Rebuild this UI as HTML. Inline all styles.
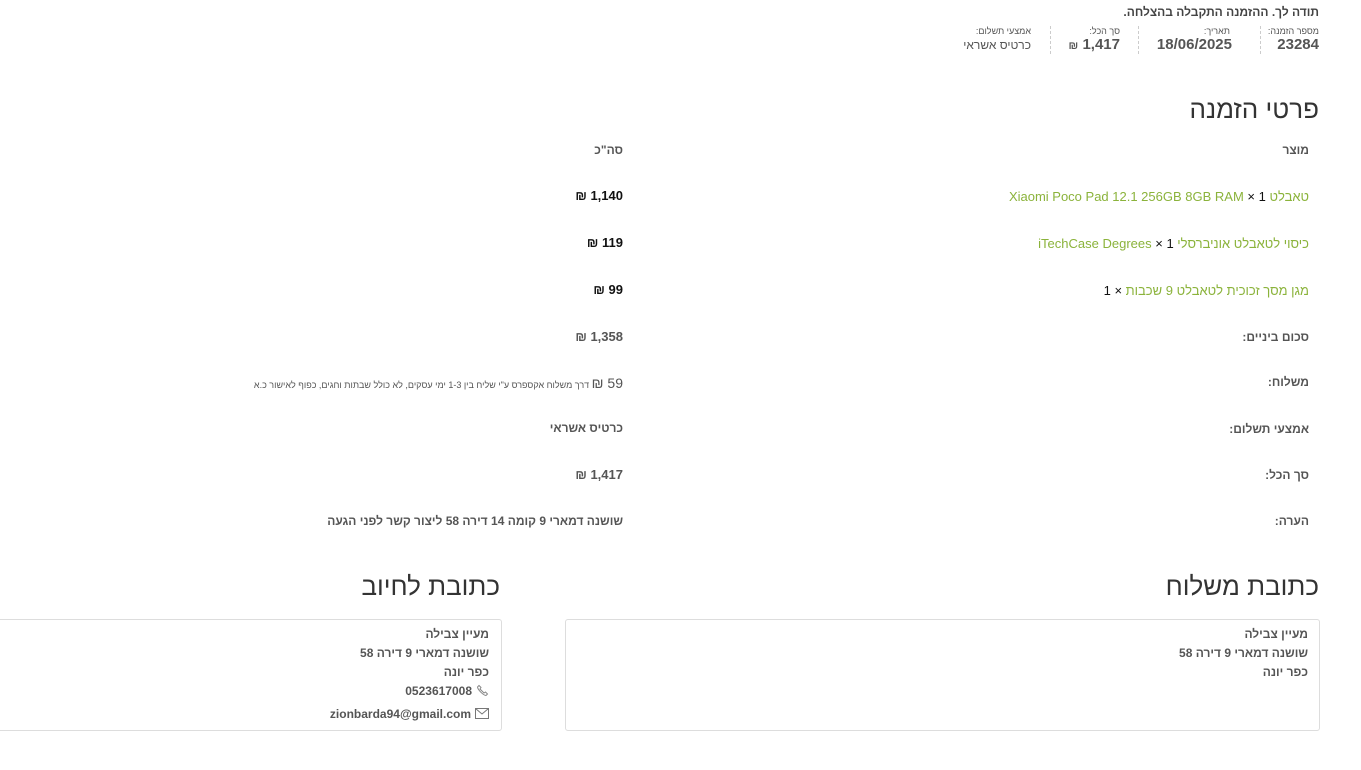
<!DOCTYPE html>
<html><head><meta charset="utf-8"><style>
body{margin:0;width:1361px;height:770px;background:#fff;font-family:"Liberation Sans","Noto Sans CJK SC",sans-serif;color:#555;position:relative;overflow:hidden}
.a{position:absolute;white-space:nowrap;direction:rtl}
.r{right:52px}
.l{right:738px}
.b{font-weight:bold}
.g{color:#8bb33b}
.k{color:#111}
.lab{font-size:9px;color:#555}
.val{font-size:15px;font-weight:bold;color:#555}
.sep{position:absolute;top:26px;height:28px;border-left:1px dashed #ccc}
h2{position:absolute;margin:0;font-weight:normal;font-size:26px;color:#333;direction:rtl;white-space:nowrap}
.box{position:absolute;border:1px solid #ddd;border-radius:3px;height:110px;top:619px}
.ln{font-size:12px;font-weight:bold;color:#555;position:absolute;direction:rtl;white-space:nowrap}
</style></head><body>
<div class="a b" style="right:42px;top:5px;font-size:12px;color:#444">תודה לך. ההזמנה התקבלה בהצלחה.</div>
<div class="a lab" style="right:42px;top:26px">מספר הזמנה:</div>
<div class="a val" style="right:42px;top:36px">23284</div>
<div class="sep" style="left:1260px"></div>
<div class="a lab" style="right:131px;top:26px">תאריך:</div>
<div class="a val" style="right:129px;top:36px">18/06/2025</div>
<div class="sep" style="left:1138px"></div>
<div class="a lab" style="right:241px;top:26px">סך הכל:</div>
<div class="a val" style="right:241px;top:36px">1,417 <span style="font-size:11px">₪</span></div>
<div class="sep" style="left:1050px"></div>
<div class="a lab" style="right:330px;top:26px">אמצעי תשלום:</div>
<div class="a" style="right:330px;top:38px;font-size:12px">כרטיס אשראי</div>

<h2 style="right:42px;top:94px">פרטי הזמנה</h2>
<div class="a b r" style="top:143px;font-size:12px">מוצר</div>
<div class="a b l" style="top:143px;font-size:12px">סה"כ</div>

<div class="a r g" style="top:189px;font-size:13px">טאבלט Xiaomi Poco Pad 12.1 256GB 8GB RAM <span class="k">× 1</span></div>
<div class="a l b k" style="top:188px;font-size:13px">1,140 ₪</div>
<div class="a r g" style="top:236px;font-size:13px">כיסוי לטאבלט אוניברסלי iTechCase Degrees <span class="k">× 1</span></div>
<div class="a l b k" style="top:235px;font-size:13px">119 ₪</div>
<div class="a r g" style="top:283px;font-size:13px">מגן מסך זכוכית לטאבלט 9 שכבות <span class="k">× 1</span></div>
<div class="a l b k" style="top:282px;font-size:13px">99 ₪</div>

<div class="a b r" style="top:330px;font-size:12px">סכום ביניים:</div>
<div class="a b l" style="top:329px;font-size:13px">1,358 ₪</div>
<div class="a b r" style="top:375px;font-size:12px">משלוח:</div>
<div class="a l" style="top:375px;font-size:9px"><span style="font-size:14px">59 ₪</span> דרך משלוח אקספרס ע"י שליח בין 1-3 ימי עסקים, לא כולל שבתות וחגים, כפוף לאישור כ.א</div>
<div class="a b r" style="top:422px;font-size:12px">אמצעי תשלום:</div>
<div class="a b l" style="top:421px;font-size:12px">כרטיס אשראי</div>
<div class="a b r" style="top:468px;font-size:12px">סך הכל:</div>
<div class="a b l" style="top:467px;font-size:13px">1,417 ₪</div>
<div class="a b r" style="top:514px;font-size:12px">הערה:</div>
<div class="a b l" style="top:514px;font-size:12px">שושנה דמארי 9 קומה 14 דירה 58 ליצור קשר לפני הגעה</div>

<h2 style="right:42px;top:571px">כתובת משלוח</h2>
<h2 style="right:861px;top:571px">כתובת לחיוב</h2>
<div class="box" style="left:565px;width:753px"></div>
<div class="ln" style="right:53px;top:627px">מעיין צבילה</div>
<div class="ln" style="right:53px;top:646px">שושנה דמארי 9 דירה 58</div>
<div class="ln" style="right:53px;top:665px">כפר יונה</div>
<div class="box" style="left:-5px;width:505px"></div>
<div class="ln" style="right:872px;top:627px">מעיין צבילה</div>
<div class="ln" style="right:872px;top:646px">שושנה דמארי 9 דירה 58</div>
<div class="ln" style="right:872px;top:665px">כפר יונה</div>
<div class="ln" style="right:872px;top:684px"><svg width="13" height="13" viewBox="0 0 13 13" style="vertical-align:-2px;margin-left:4px"><path d="M3 1.5l2 2-1 1.5 4 4 1.5-1 2 2-1.5 1.5C7 11 2 6 1.5 3z" fill="none" stroke="#888" stroke-width="1"/></svg>0523617008</div>
<div class="ln" style="right:872px;top:707px"><svg width="14" height="11" viewBox="0 0 14 11" style="vertical-align:-1px;margin-left:4px"><rect x="0.5" y="0.5" width="13" height="10" fill="none" stroke="#777"/><path d="M0.5 0.5L7 6l6.5-5.5" fill="none" stroke="#777"/></svg>zionbarda94@gmail.com</div>
</body></html>
